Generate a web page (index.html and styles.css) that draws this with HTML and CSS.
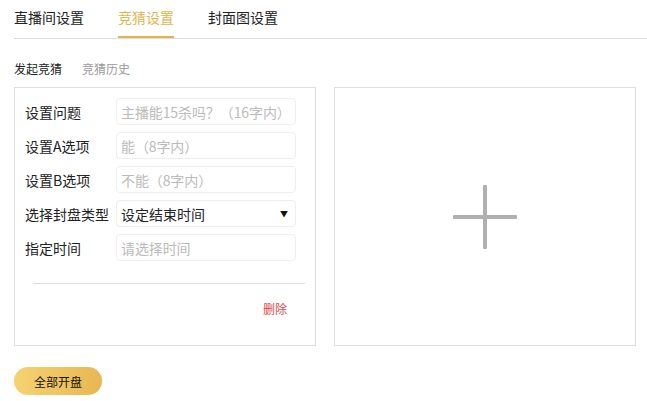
FILE: index.html
```html
<!DOCTYPE html>
<html>
<head>
    <meta charset="utf-8">
    <title>竞猜设置</title>
    <link rel="stylesheet" href="styles.css">
</head>
<body>
    <div class="page">
        <div class="tabs">
            <div class="tab">直播间设置</div>
            <div class="tab active">竞猜设置</div>
            <div class="tab">封面图设置</div>
        </div>

        <div class="sub-tabs">
            <span class="sub-tab active">发起竞猜</span>
            <span class="sub-tab">竞猜历史</span>
        </div>

        <div class="cards">
            <div class="card form-card">
                <div class="row">
                    <label>设置问题</label>
                    <input type="text" placeholder="主播能15杀吗？（16字内）">
                </div>
                <div class="row">
                    <label>设置A选项</label>
                    <input type="text" placeholder="能（8字内）">
                </div>
                <div class="row">
                    <label>设置B选项</label>
                    <input type="text" placeholder="不能（8字内）">
                </div>
                <div class="row">
                    <label>选择封盘类型</label>
                    <div class="select-wrap">
                        <select>
                            <option>设定结束时间</option>
                            <option>手动封盘</option>
                        </select>
                        <span class="arrow">▼</span>
                    </div>
                </div>
                <div class="row">
                    <label>指定时间</label>
                    <input type="text" placeholder="请选择时间">
                </div>
                <div class="divider"></div>
                <div class="actions">
                    <a class="delete">删除</a>
                </div>
            </div>

            <div class="card upload-card">
                <div class="plus"></div>
            </div>
        </div>

        <button class="open-all">全部开盘</button>
    </div>
</body>
</html>
```

FILE: styles.css
```css
body {
    margin: 0;
    font-family: "Noto Sans CJK SC", "Noto Sans", sans-serif;
    color: #222;
    background: #fff;
    text-spacing-trim: space-all;
}

.page {
    padding-left: 14px;
}

.tabs {
    display: flex;
    gap: 34px;
    height: 38px;
    border-bottom: 1px solid #ddd;
}

.tab {
    font-size: 14px;
    line-height: 20px;
    padding-top: 7px;
    height: 29px;
    color: #222;
}

.tab.active {
    color: #e2b54c;
    border-bottom: 2px solid #e2b54c;
}

.sub-tabs {
    display: flex;
    gap: 20px;
    margin-top: 21px;
    font-size: 12px;
    line-height: 17px;
}

.sub-tab {
    color: #999;
}

.sub-tab.active {
    color: #222;
}

.cards {
    display: flex;
    gap: 18px;
    margin-top: 10px;
}

.card {
    width: 300px;
    height: 257px;
    border: 1px solid #ddd;
}

.form-card {
    padding: 10px 0 0 10px;
    width: 290px;
    height: 247px;
}

.row {
    display: flex;
    align-items: center;
    height: 27px;
    margin-bottom: 7px;
}

.row label {
    width: 91px;
    font-size: 14px;
    color: #222;
}

.row input,
.row select {
    box-sizing: border-box;
    width: 180px;
    height: 27px;
    border: 1px solid #eee;
    border-radius: 4px;
    padding: 0 0 0 4px;
    font-family: inherit;
    font-size: 14px;
    color: #222;
    outline: none;
    background: #fff;
    text-spacing-trim: space-all;
}

.row input::placeholder {
    color: #bbb;
    letter-spacing: -0.1px;
}

.select-wrap {
    position: relative;
}

.row select {
    appearance: none;
    -webkit-appearance: none;
}

.arrow {
    position: absolute;
    right: 8px;
    top: 8px;
    font-size: 8px;
    color: #111;
    pointer-events: none;
}

.divider {
    width: 272px;
    height: 1px;
    background: #ddd;
    margin: 22px 0 0 8px;
}

.actions {
    display: flex;
    justify-content: flex-end;
    padding-right: 28px;
    margin-top: 16px;
}

.delete {
    font-size: 12px;
    line-height: 17px;
    color: #d24b4b;
    cursor: pointer;
}

.upload-card {
    display: flex;
    align-items: center;
    justify-content: center;
}

.plus {
    position: relative;
    width: 64px;
    height: 64px;
}

.plus::before,
.plus::after {
    content: "";
    position: absolute;
    background: #b0b0b0;
    border-radius: 1px;
}

.plus::before {
    left: 0;
    top: 30px;
    width: 64px;
    height: 4px;
}

.plus::after {
    left: 30px;
    top: 0;
    width: 4px;
    height: 64px;
}

.open-all {
    margin-top: 21px;
    width: 88px;
    height: 28px;
    border: none;
    border-radius: 14px;
    background: linear-gradient(90deg, #f6d272, #e8b752);
    font-family: inherit;
    font-size: 12px;
    color: #111;
    cursor: pointer;
}
```
